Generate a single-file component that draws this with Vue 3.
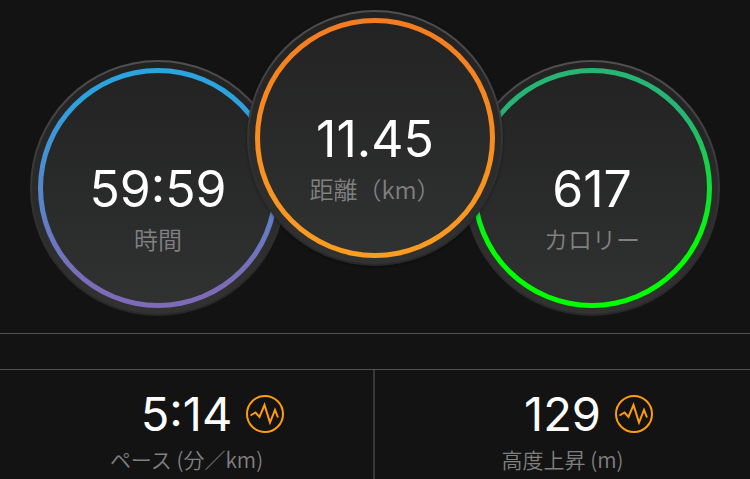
<template>
  <main class="summary">
    <!-- メイン指標 -->
    <section class="dials">
      <div
        v-for="dial in dials"
        :key="dial.name"
        class="dial"
        :class="dial.name"
      >
        <div class="ring">
          <div class="face">
            <span class="dial-value">{{ dial.value }}</span>
            <span class="dial-label">{{ dial.label }}</span>
          </div>
        </div>
      </div>
    </section>

    <div class="divider"></div>

    <!-- サブ指標 -->
    <section class="stats">
      <div v-for="stat in stats" :key="stat.label" class="stat">
        <div class="stat-row">
          <span class="stat-value">{{ stat.value }}</span>
          <button type="button" class="chart-btn" :aria-label="stat.label">
            <svg viewBox="0 0 38 38" width="38" height="38">
              <circle cx="19" cy="19" r="18" />
              <path d="M4.5 20.5L9.5 17.5L13.5 22L18.5 10L24 27.5L29 15L32 22.5" />
            </svg>
          </button>
        </div>
        <span class="stat-label">{{ stat.label }}</span>
      </div>
    </section>
  </main>
</template>

<script setup>
const dials = [
  { name: 'time', value: '59:59', label: '時間' },
  { name: 'distance', value: '11.45', label: '距離（km）' },
  { name: 'calories', value: '617', label: 'カロリー' }
]

const stats = [
  { value: '5:14', label: 'ペース (分／km)' },
  { value: '129', label: '高度上昇 (m)' }
]
</script>

<style>
body {
  background: #131313;
}
</style>

<style scoped>
.summary {
  overflow: hidden;
  background: #131313;
  color: #fff;
  font-family: Inter, "Noto Sans CJK JP", sans-serif;
}

.dials {
  display: flex;
  justify-content: center;
  align-items: flex-end;
  padding: 10px 0 17px;
}

.dial {
  box-sizing: border-box;
  flex: none;
  width: 256px;
  height: 256px;
  padding: 6px;
  border: 2px solid transparent;
  border-radius: 50%;
  background:
    linear-gradient(#222, #323232) padding-box,
    linear-gradient(#505050, #303030 60%, #282828) border-box;
}
.dial.distance {
  z-index: 1;
  align-self: flex-start;
  margin: 0 -39px 50px;
  box-shadow: 0 1px 3px rgba(0, 0, 0, 0.4);
}

.ring {
  box-sizing: border-box;
  height: 100%;
  padding: 5px;
  border-radius: 50%;
}
.time .ring {
  background: linear-gradient(#2ba3de 12%, #7d6bb8 90%);
}
.distance .ring {
  background: linear-gradient(#f47c20, #fb9d20);
}
.calories .ring {
  background: linear-gradient(#26b573 20%, #00ff00 75%);
}

.face {
  box-sizing: border-box;
  display: flex;
  flex-direction: column;
  align-items: center;
  height: 100%;
  padding-top: 86px;
  border-radius: 50%;
  background: linear-gradient(#232323, #303131);
}

.dial-value {
  font-size: 50px;
  line-height: 60px;
}
.dial-label {
  color: #808080;
  font-family: "Noto Sans CJK JP DemiLight", "Noto Sans CJK JP", sans-serif;
  font-size: 24px;
  font-weight: 350;
  line-height: 40px;
}

.divider {
  height: 35px;
  border-top: 1px solid #505050;
}

.stats {
  display: grid;
  grid-template-columns: 1fr 1fr;
  border-top: 1px solid #505050;
}
.stat {
  display: flex;
  flex-direction: column;
  align-items: center;
  padding: 16px 0 3px;
}
.stat:first-child {
  border-right: 2px solid #383838;
}

.stat-row {
  display: grid;
  grid-template-columns: 1fr auto 1fr;
  align-items: center;
  column-gap: 14px;
  width: 100%;
}
.stat-value {
  grid-column: 2;
  font-size: 47px;
  line-height: 56px;
}
.chart-btn {
  justify-self: start;
  width: 38px;
  height: 38px;
  padding: 0;
  border: none;
  background: none;
  cursor: pointer;
}
.chart-btn svg {
  display: block;
  fill: none;
  stroke: #ff9b10;
  stroke-width: 2;
}

.stat-label {
  color: #808080;
  font-family: "Noto Sans CJK JP DemiLight", "Noto Sans CJK JP", sans-serif;
  font-size: 21px;
  font-weight: 350;
  line-height: 34px;
}
</style>
